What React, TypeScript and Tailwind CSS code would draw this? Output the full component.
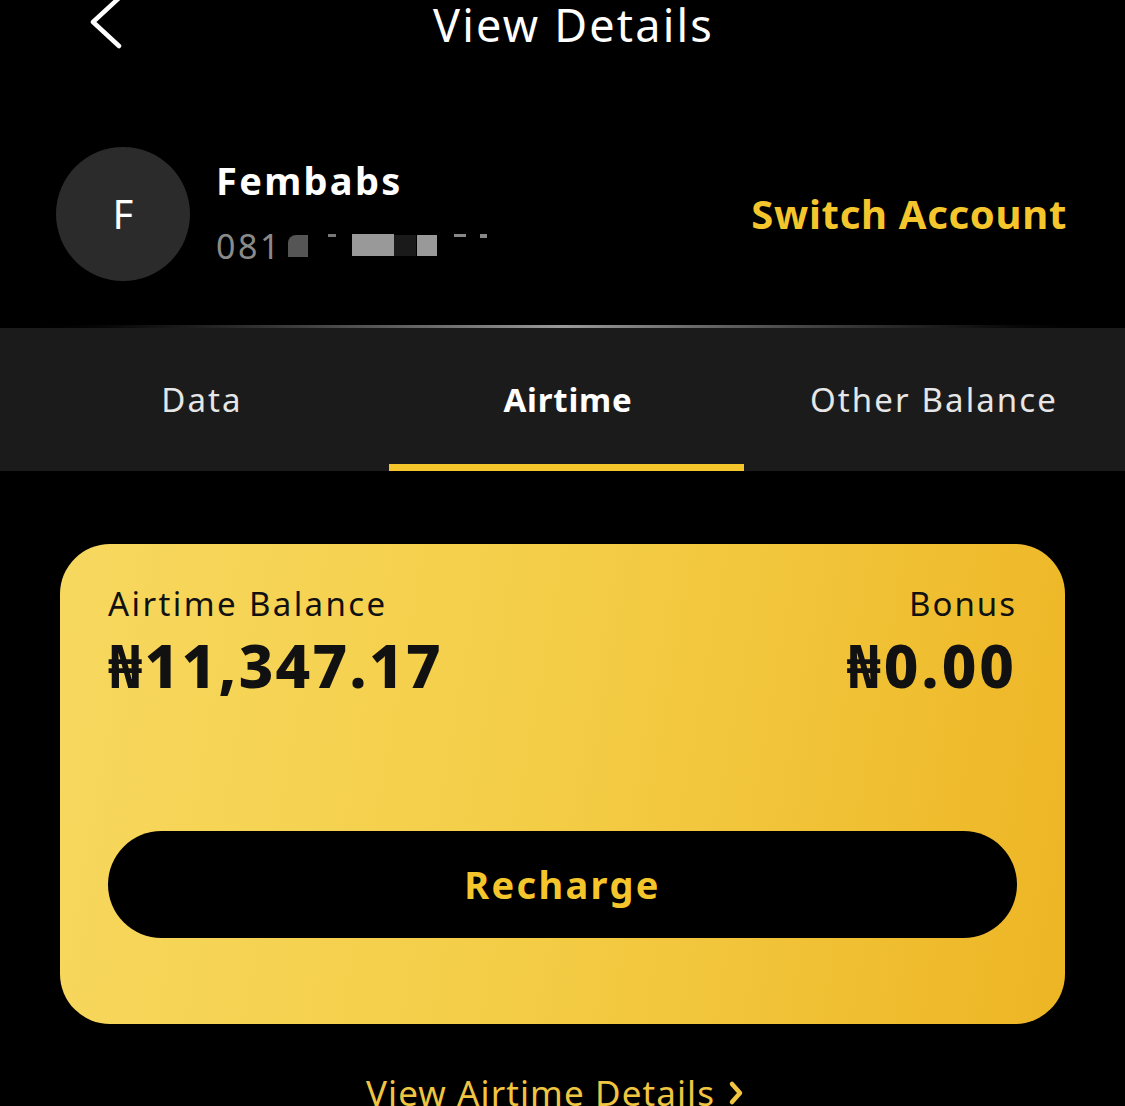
const tabs = [
  { label: 'Data', active: false },
  { label: 'Airtime', active: true },
  { label: 'Other Balance', active: false },
];

const font = { fontFamily: "'Noto Sans', 'DejaVu Sans', sans-serif" };

export default function App() {
  return (
    <div className="w-[1125px] h-[1106px] overflow-hidden bg-black text-white" style={font}>
      {/* header */}
      <div className="relative h-[50px] flex justify-center">
        <svg className="absolute left-[86px] top-[-4px]" width="42" height="56" viewBox="0 0 42 56" fill="none">
          <polyline points="33,2 7,26 33,50" stroke="#ffffff" strokeWidth="4.5" strokeLinecap="round" strokeLinejoin="round" />
        </svg>
        <h1 className="text-[45px] leading-[1.1] tracking-[2.2px] pl-[22px]">View Details</h1>
      </div>

      {/* profile */}
      <div className="h-[275px] flex items-center pl-[56px] pr-[58px] pt-[53px]">
        <div className="w-[134px] h-[134px] rounded-full bg-[#2b2b2b] flex items-center justify-center text-[40px]">
          F
        </div>
        <div className="ml-[26px] flex flex-col">
          <span className="text-[38px] font-bold leading-none tracking-[2.3px] -mt-[4px]">Fembabs</span>
          <span className="mt-[30px] h-[34px] text-[34px] leading-none text-[#8a8a8a] tracking-[2.5px] flex items-center">
            081
            <span className="relative w-[220px] h-[24px]">
              <span className="absolute left-[6px] top-[1px] w-[20px] h-[22px] rounded-tl-[8px] bg-[#555]"></span>
              <span className="absolute left-[46px] top-0 w-[8px] h-[3px] bg-[#777]"></span>
              <span className="absolute left-[70px] top-0 w-[42px] h-[22px] bg-[#999]"></span>
              <span className="absolute left-[112px] top-[1px] w-[22px] h-[21px] bg-[#1a1a1a]"></span>
              <span className="absolute left-[135px] top-[1px] w-[20px] h-[21px] bg-[#999]"></span>
              <span className="absolute left-[172px] top-0 w-[12px] h-[3px] bg-[#888]"></span>
              <span className="absolute left-[198px] top-0 w-[7px] h-[4px] bg-[#888]"></span>
            </span>
          </span>
        </div>
        <span className="ml-auto text-[40px] font-bold text-[#f5c62c] tracking-[0.7px]">Switch Account</span>
      </div>

      {/* separator */}
      <div className="h-[3px] bg-gradient-to-r from-black via-[#9a9a9a] to-black"></div>

      {/* tabs */}
      <div className="h-[143px] bg-[#1b1b1b] grid grid-cols-3 pl-[19px] pr-[8px]">
        {tabs.map(({ label, active }) => (
          <div key={label} className="relative flex items-center justify-center">
            <span
              className={
                active
                  ? 'text-[33px] font-bold text-white tracking-[0.8px]'
                  : 'text-[33px] text-[#e6e6e6] tracking-[2.1px]'
              }
            >
              {label}
            </span>
            {active && <div className="absolute bottom-0 left-[4px] right-[7px] h-[7px] bg-[#f5c62c]"></div>}
          </div>
        ))}
      </div>

      {/* balance card */}
      <div className="mt-[73px] mx-[60px] h-[480px] rounded-[50px] bg-[linear-gradient(100deg,#f7d85f_0%,#f4ce48_45%,#f2c63c_65%,#edb524_100%)] px-[48px] pt-[43px] text-[#111]">
        <div className="flex justify-between">
          <div className="flex flex-col">
            <span className="text-[33px] leading-none tracking-[2.4px]">Airtime Balance</span>
            <span className="mt-[15px] text-[60px] font-extrabold leading-none tracking-[2.3px]">₦11,347.17</span>
          </div>
          <div className="flex flex-col items-end">
            <span className="text-[33px] leading-none tracking-[2px]">Bonus</span>
            <span className="mt-[15px] text-[60px] font-extrabold leading-none tracking-[3px]">₦0.00</span>
          </div>
        </div>
        <button className="mt-[136px] w-full h-[107px] rounded-full bg-black flex items-center justify-center">
          <span className="text-[38px] font-bold text-[#f5c62c] tracking-[2.3px]">Recharge</span>
        </button>
      </div>

      {/* link */}
      <div className="mt-[51px] flex items-center justify-center gap-[12px] pr-[14px] text-[#f0c541]">
        <span className="text-[35px] leading-none tracking-[1.1px]">View Airtime Details</span>
        <svg width="18" height="26" viewBox="0 0 18 26" fill="none">
          <polyline points="5,4 13,13 5,22" stroke="#f0c541" strokeWidth="4.5" strokeLinecap="round" strokeLinejoin="round" />
        </svg>
      </div>
    </div>
  );
}
